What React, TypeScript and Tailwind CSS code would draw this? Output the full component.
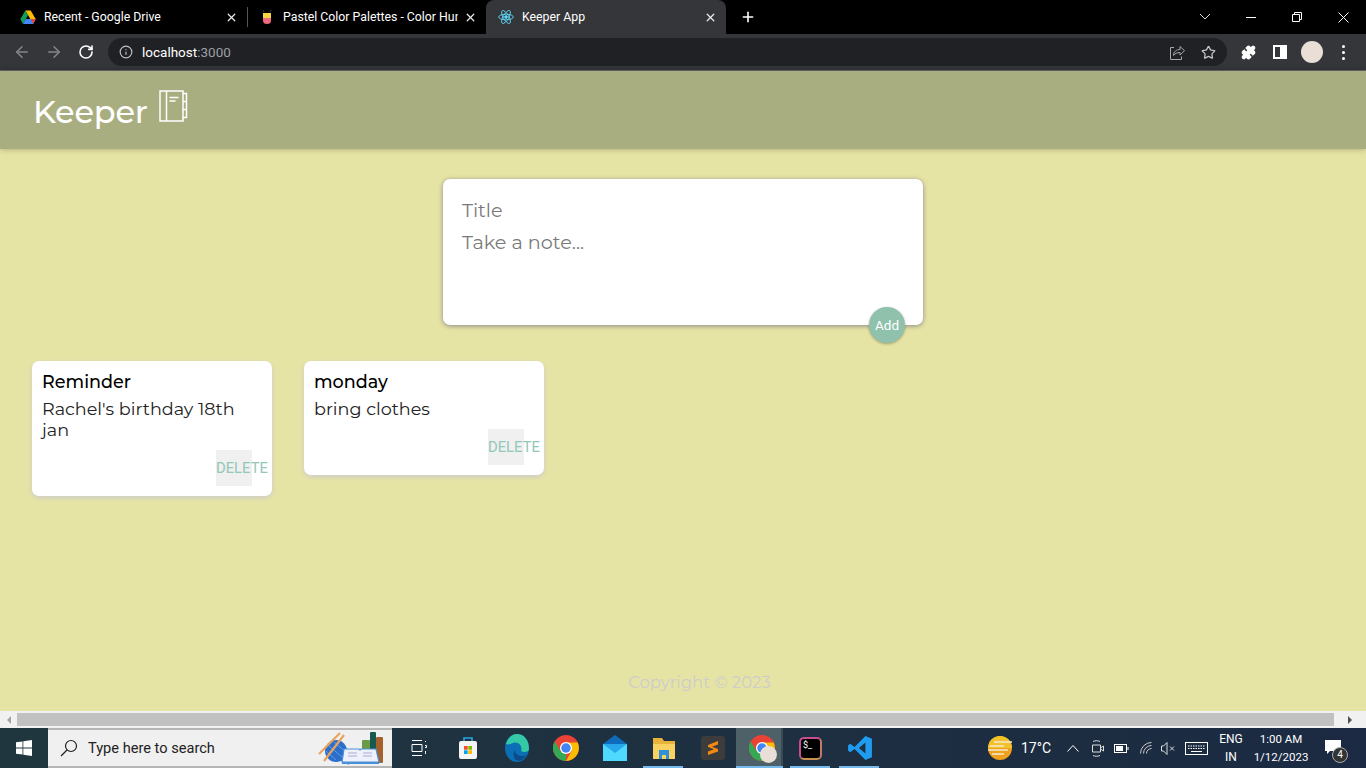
import { ArrowLeft, ArrowRight, RotateCw, Info, Star, Puzzle, X, Plus } from 'lucide-react';

function DriveIcon() {
    return (
        <svg width="16" height="15" viewBox="0 0 16 15">
            <path d="M5.3 0.5h5.4l5 8.6h-5.4z" fill="#fbbc04" />
            <path d="M5.3 0.5L0.3 9.2l2.7 4.8 5-8.7z" fill="#0f9d58" />
            <path d="M3 14h10.2l2.5-4.9H5.7z" fill="#4285f4" />
            <path d="M13.2 14l2.5-4.9h-5z" fill="#ea4335" />
        </svg>
    );
}

function HuntIcon() {
    return (
        <svg width="14" height="16" viewBox="0 0 14 16">
            <path d="M3 4h8v5H3z" fill="#f6d743" />
            <path d="M3 9h8v2.5a4 3.5 0 0 1-8 0z" fill="#ee6a7c" />
            <path d="M3 1l1 2M11 1l-1 2" stroke="#333" />
        </svg>
    );
}

function ReactIcon() {
    return (
        <svg width="16" height="16" viewBox="0 0 24 24" fill="none" stroke="#61dafb" strokeWidth="1.3">
            <circle cx="12" cy="12" r="2" fill="#61dafb" />
            <ellipse cx="12" cy="12" rx="11" ry="4.2" />
            <ellipse cx="12" cy="12" rx="11" ry="4.2" transform="rotate(60 12 12)" />
            <ellipse cx="12" cy="12" rx="11" ry="4.2" transform="rotate(120 12 12)" />
        </svg>
    );
}

function NotebookIcon() {
    return (
        <svg width="29" height="33" viewBox="0 0 29 33" fill="none" stroke="#fff" strokeWidth="1.5">
            <path d="M1 1h23v30H1z" />
            <path d="M7.5 1v30" />
            <path d="M24 3.5h3.5v8H24M24 11.5h3.5v8H24M24 19.5h3.5v8H24" />
            <path d="M10.5 7.5h9M10.5 11h6" strokeWidth="1.4" />
        </svg>
    );
}

function ChromeIcon() {
    return (
        <svg width="26" height="26" viewBox="0 0 24 24">
            <circle cx="12" cy="12" r="12" fill="#ea4335" />
            <path d="M12 24A12 12 0 0 1 1.6 6L7 15l5 2z" fill="#34a853" />
            <path d="M12 24l5-9-5-8h10.8A12 12 0 0 1 12 24z" fill="#fbbc04" />
            <circle cx="12" cy="12" r="5.6" fill="#fff" />
            <circle cx="12" cy="12" r="4.4" fill="#4285f4" />
        </svg>
    );
}

function Tab({ icon, title, active, width, left }: { icon: React.ReactNode; title: string; active?: boolean; width: string; left: string }) {
    return (
        <div className={`flex items-center h-[34px] shrink-0 pr-[8px] ${left} ${width} ${active ? 'bg-[#35363a] rounded-t-[8px]' : 'bg-black'}`}>
            <div className="w-[20px] flex justify-center shrink-0">{icon}</div>
            <span className="ml-[6px] flex-1 min-w-0 text-[12.3px] text-white whitespace-nowrap overflow-hidden">{title}</span>
            <X size={13} strokeWidth={2.4} className="text-[#e8eaed] ml-[6px] mr-[1px] shrink-0" />
        </div>
    );
}

function Note({ title, body }: { title: string; body: string }) {
    return (
        <div className="w-[240px] bg-white rounded-[7px] shadow-[0_2px_5px_#ccc] py-[10px] px-[10px] shrink-0">
            <h1 className="text-[17.6px] leading-[22px] font-medium text-black">{title}</h1>
            <p className="text-[17.6px] leading-[21px] mt-[5px] mb-[10px] text-[#222] font-normal">{body}</p>
            <div className="flex justify-end pr-[10px]">
                <button className="w-[36px] h-[36px] bg-[#f0f0f0] text-[14.8px] text-[#93c7b8] font-['Roboto',sans-serif] flex items-center whitespace-nowrap">DELETE</button>
            </div>
        </div>
    );
}

function TaskCell({ children, lit, active }: { children: React.ReactNode; lit?: boolean; active?: boolean }) {
    return (
        <div className="w-[49px] h-[40px] flex justify-center items-center relative shrink-0">
            {active && <div className="absolute inset-y-0 left-[-1px] right-[3px] bg-[#4e6068] border-r-2 border-[#3a4a54]" />}
            <div className="relative flex">{children}</div>
            {lit && <div className={`absolute bottom-0 h-[2px] bg-[#76b9ed] ${active ? 'left-[-1px] right-[3px]' : 'left-[4px] right-[5px]'}`} />}
        </div>
    );
}

export default function App() {
    return (
        <div className="w-[1366px] h-[768px] flex flex-col overflow-hidden font-['Montserrat','Inter',sans-serif] bg-[#e6e4a4]">
            {/* tabs */}
            <div className="h-[34px] bg-black flex items-center shrink-0 font-['Roboto',sans-serif]">
                <div className="w-[8px]" />
                <Tab icon={<DriveIcon />} title="Recent - Google Drive" width="w-[239px]" left="pl-[10px]" />
                <div className="w-[1px] h-[20px] bg-[#555]" />
                <Tab icon={<HuntIcon />} title="Pastel Color Palettes - Color Hunt" width="w-[238px]" left="pl-[9px]" />
                <Tab icon={<ReactIcon />} title="Keeper App" width="w-[240px]" left="pl-[10px]" active />
                <Plus size={16} strokeWidth={2.4} className="text-white ml-[14px]" />
                <div className="flex-1" />
                <svg width="10" height="6" viewBox="0 0 10 6" fill="none" stroke="#ddd" className="mr-[36px]"><path d="M0 0l5 5 5-5" /></svg>
                <div className="w-[10px] h-[1px] bg-white mr-[36px]" />
                <svg width="10" height="10" viewBox="0 0 10 10" fill="none" stroke="#fff" className="mr-[36px]">
                    <path d="M2.5 2.5V.5h7v7h-2M.5 2.5h7v7h-7z" />
                </svg>
                <svg width="11" height="11" viewBox="0 0 11 11" fill="none" stroke="#fff" className="mr-[17px]"><path d="M.5.5l10 10M10.500.5l-10 10" /></svg>
            </div>
            {/* toolbar */}
            <div className="h-[37px] bg-[#35363a] border-b border-[#6b6b6b] flex items-center shrink-0 font-['Roboto',sans-serif]">
                <ArrowLeft size={18} className="text-[#85878a] ml-[13px]" />
                <ArrowRight size={18} className="text-[#85878a] ml-[14px]" />
                <RotateCw size={16} strokeWidth={2.4} className="text-white ml-[15px]" />
                <div className="ml-[14px] w-[1119px] h-[28px] bg-[#202124] rounded-full flex items-center pl-[11px] pr-[11px]">
                    <Info size={14} className="text-[#bdc1c6]" />
                    <span className="ml-[9px] text-[13.5px] text-white">localhost<span className="text-[#9aa0a6]">:3000</span></span>
                    <div className="flex-1" />
                    <svg width="16" height="15" viewBox="0 0 16 15" fill="none" stroke="#a5a7aa" className="mr-[16px]">
                        <path d="M5 2.500H1.500v12h11v-3" />
                        <path d="M4.500 10.500c0-4 3-6 6.500-6V1.500l4.500 4.200L11 10V7.500c-3 0-5 1-6.500 3z" />
                    </svg>
                    <Star size={15} className="text-[#c4c6c8]" />
                </div>
                <Puzzle size={15} fill="#fff" className="text-white ml-[14px]" />
                <div className="ml-[17px] w-[14px] h-[14px] border-[2px] border-white bg-[#35363a] flex justify-end">
                    <div className="w-[5px] bg-white" />
                </div>
                <div className="ml-[14px] w-[22px] h-[22px] rounded-full bg-[#eadfd6]" />
                <div className="ml-[19px] flex flex-col gap-[3px]">
                    <div className="w-[3px] h-[3px] rounded-full bg-white" />
                    <div className="w-[3px] h-[3px] rounded-full bg-white" />
                    <div className="w-[3px] h-[3px] rounded-full bg-white" />
                </div>
            </div>
            {/* page */}
            <div className="flex-1 flex flex-col min-h-0">
                <header className="h-[78px] bg-[#a9ae80] shadow-[0_0_6px_rgba(0,0,0,0.3)] flex items-start pl-[33px] pt-[19px] shrink-0">
                    <span className="text-[32px] leading-[44px] text-white font-medium tracking-[-0.2px]">Keeper</span>
                    <div className="ml-[11px]"><NotebookIcon /></div>
                </header>
                <div className="flex justify-center shrink-0 mt-[30px]">
                    <div className="relative w-[480px] h-[146px] bg-white rounded-[7px] shadow-[0_1px_5px_rgb(138,138,138)] px-[19px] pt-[19px]">
                        <div className="text-[19.2px] leading-[24px] text-[#7a7a7a]">Title</div>
                        <div className="text-[19.2px] leading-[24px] text-[#7a7a7a] mt-[8px]">Take a note...</div>
                        <button className="absolute right-[18px] bottom-[-18px] w-[36px] h-[36px] pt-[1px] rounded-full bg-[#8fc1ad] text-white text-[13.5px] font-['Roboto',sans-serif] shadow-[0_1px_3px_rgba(0,0,0,0.3)]">Add</button>
                    </div>
                </div>
                <div className="flex items-start gap-[32px] pl-[32px] mt-[36px] shrink-0">
                    <Note title="Reminder" body="Rachel's birthday 18th jan" />
                    <Note title="monday" body="bring clothes" />
                </div>
                <div className="flex-1" />
                <footer className="h-[20px] mb-[19px] text-center text-[16.5px] leading-[20px] text-[#ccc] pl-[33px]">Copyright © 2023</footer>
            </div>
            {/* scrollbar */}
            <div className="h-[17px] bg-[#f1f1f1] flex items-center shrink-0">
                <div className="w-[17px] flex justify-center"><div className="w-0 h-0 border-y-[4px] border-y-transparent border-r-[4px] border-r-[#a3a3a3]" /></div>
                <div className="w-[1317px] h-[13px] bg-[#c1c1c1]" />
                <div className="flex-1 flex justify-center"><div className="w-0 h-0 border-y-[4px] border-y-transparent border-l-[4px] border-l-[#505050]" /></div>
            </div>
            {/* taskbar */}
            <div className="h-[40px] bg-gradient-to-r from-[#20363f] to-[#1b2a42] flex items-center shrink-0 text-white font-['Roboto',sans-serif]">
                <div className="w-[48px] flex justify-center">
                    <svg width="16" height="16" viewBox="0 0 16 16" fill="#fff"><path d="M0 2.300l6.500-.9v6.200H0zM7.300 1.300L16 0v7.600H7.300zM0 8.400h6.500v6.200L0 13.700zM7.300 8.400H16V16l-8.700-1.300z" /></svg>
                </div>
                <div className="w-[344px] h-[40px] bg-[#f0f0f0] border-y-2 border-[#b5b5b5] flex items-center pl-[12px] relative">
                    <svg width="18" height="18" viewBox="0 0 18 18" fill="none" stroke="#222" strokeWidth="1.2"><circle cx="11" cy="7" r="5.500" /><path d="M7 11l-6 6" /></svg>
                    <span className="ml-[10px] text-[14.6px] text-[#222] pt-[2px]">Type here to search</span>
                    <svg width="76" height="38" viewBox="0 0 76 38" className="absolute right-[0px] top-[-1px]">
                        <path d="M19 26c3 4 8 6 14 9" fill="none" stroke="#2d72d0" strokeWidth="1.500" />
                        <circle cx="20" cy="22" r="11" fill="#2d6ecb" />
                        <path d="M12 16l14 12M10 22l10 9M18 13l13 11" stroke="#5b9be8" />
                        <path d="M8 32L28 6M3 25L24 4" stroke="#e8a35c" strokeWidth="2.200" />
                        <rect x="54" y="3" width="6" height="19" rx="1" fill="#17594e" />
                        <rect x="46" y="11" width="8" height="11" rx="1" fill="#6a9a45" />
                        <rect x="60" y="8" width="7" height="26" rx="1" fill="#a5602c" />
                        <path d="M28 20h15l1 1 1-1h15l3 13H26z" fill="#eef0fb" stroke="#4a90d9" strokeWidth="1.200" />
                        <path d="M32 24h9M32 27h9M47 24h9M47 27h9" stroke="#a9aed0" />
                        <path d="M26 33h37v2H26z" fill="#4a90d9" />
                    </svg>
                </div>
                <div className="w-[2px] shrink-0" />
                <TaskCell>
                    <svg width="16" height="16" viewBox="0 0 16 16" fill="none" stroke="#fff"><path d="M1 .5h10M1 15.500h10M1 4.500h10v7H1zM14.500 1v1M14 5.500h1.500v2H14M14.500 11v3" /></svg>
                </TaskCell>
                <TaskCell>
                    <svg width="18" height="24" viewBox="0 0 18 24"><path d="M5 6V2h8v4" fill="none" stroke="#2aa5e0" strokeWidth="1.600" /><rect x="0" y="5" width="18" height="18" rx="2" fill="#f4f4f4" /><rect x="5" y="10" width="3.700" height="3.700" fill="#f25022" /><rect x="9.300" y="10" width="3.700" height="3.700" fill="#7fba00" /><rect x="5" y="14.300" width="3.700" height="3.700" fill="#00a4ef" /><rect x="9.300" y="14.300" width="3.700" height="3.700" fill="#ffb900" /></svg>
                </TaskCell>
                <TaskCell>
                    <svg width="24" height="28" viewBox="0 0 24 28"><ellipse cx="12" cy="14" rx="12" ry="14" fill="#0c6fb5" /><path d="M1 10C3 3 8 0 12 0c7 0 12 6 12 15 0 3-5 4-8 2 2-5-3-10-8-8-3 1-5 2-7 1z" fill="#35c8a5" /><path d="M10 16c0 4 4 6 8 6 2 0 3-1 4-2-2 5-7 8-11 6-3-2-3-8-1-10z" fill="#0a4c8c" /></svg>
                </TaskCell>
                <TaskCell><ChromeIcon /></TaskCell>
                <TaskCell>
                    <svg width="24" height="26" viewBox="0 0 24 26"><path d="M0 9l12-9 12 9v17H0z" fill="#0f6cbd" /><path d="M0 9h24v17H0z" fill="#28a8ea" /><path d="M0 9l12 9 12-9v17H0z" fill="#50d9ff" /></svg>
                </TaskCell>
                <TaskCell lit>
                    <svg width="22" height="21" viewBox="0 0 22 21"><path d="M0 0h9l2 3h11v15H0z" fill="#e9b23a" /><path d="M0 6h22v15H0z" fill="#f9d262" /><path d="M6 12h10v9h-3v-4H9v4H6z" fill="#2f8fd8" /></svg>
                </TaskCell>
                <TaskCell>
                    <div className="w-[24px] h-[24px] rounded-[3px] bg-[#3c3c3c] flex items-center justify-center">
                        <svg width="12" height="16" viewBox="0 0 12 16" fill="#f48a12"><path d="M1 5L11 1v3.500L5 6.800 11 9v2.500L1 15v-3.500l6-2.300L1 7z" /></svg>
                    </div>
                </TaskCell>
                <TaskCell lit active>
                    <div className="relative">
                        <ChromeIcon />
                        <div className="absolute left-[11px] top-[11px] w-[17px] h-[17px] rounded-full bg-[#eadfd6]" />
                    </div>
                </TaskCell>
                <TaskCell lit>
                    <div className="w-[23px] h-[23px] rounded-[5px] bg-black border-2 border-t-[#c84d8c] border-l-[#c84d8c] border-r-[#c07a6a] border-b-[#c9914e] text-white text-[9px] leading-[12px] pl-[2px]">$_</div>
                </TaskCell>
                <TaskCell lit>
                    <svg width="26" height="26" viewBox="0 0 24 24"><path d="M17 1L7 11 3 8 1 9.500v5L3 16l4-3 10 10 6-2.500v-17zm0 6v10l-6-5z" fill="#1f9cf0" /></svg>
                </TaskCell>
                <div className="flex-1" />
                <svg width="24" height="24" viewBox="0 0 24 24" className="shrink-0">
                    <circle cx="12" cy="12" r="12" fill="#f0a21e" />
                    <path d="M12 0a12 12 0 0 1 12 12H0A12 12 0 0 1 12 0z" fill="#f3c22a" />
                    <path d="M6 6h18M2 10h14M0 14h20M4 18h12" stroke="#f5ead0" strokeWidth="1.500" />
                </svg>
                <span className="ml-[9px] text-[14px] w-[28px] whitespace-nowrap">17°C</span>
                <svg width="12" height="7" viewBox="0 0 12 7" fill="none" stroke="#fff" className="ml-[18px]"><path d="M.5 6.500l5.500-6 5.500 6" /></svg>
                <svg width="12" height="17" viewBox="0 0 12 17" fill="none" stroke="#ddd" className="ml-[13px]"><path d="M1 1.500C3 .5 6 .5 8 1.500M1 15.500c2 1 5 1 7 0M.5 5h8v7h-8zM8.500 8l3-2v5l-3-2" /></svg>
                <svg width="15" height="9" viewBox="0 0 15 9" fill="none" stroke="#fff" className="ml-[10px]"><rect x=".5" y=".5" width="12" height="8" /><rect x="2" y="2" width="7" height="5" fill="#fff" stroke="none" /><path d="M14 3v3" /></svg>
                <svg width="12" height="12" viewBox="0 0 12 12" fill="none" stroke="#ccc" className="ml-[11px]"><path d="M.5 11.500A11 11 0 0 1 11.500 .5M3.500 11.500a8 8 0 0 1 8-8M6.500 11.500a5 5 0 0 1 5-5" /></svg>
                <svg width="14" height="13" viewBox="0 0 14 13" fill="none" stroke="#ddd" className="ml-[9px]"><path d="M.5 4h2L6 .5v12L2.500 9h-2zM9 4.500l4 4M13 4.500l-4 4" /></svg>
                <svg width="23" height="13" viewBox="0 0 23 13" fill="none" stroke="#fff" className="ml-[10px]"><rect x=".5" y=".5" width="22" height="12" /><path d="M3 4h17M3 6.500h17" strokeDasharray="1.500 1" /><path d="M6 9.500h11" /></svg>
                <div className="flex flex-col items-center text-[12px] leading-[18px] ml-[11px] w-[24px]"><span>ENG</span><span>IN</span></div>
                <div className="flex flex-col items-center text-[11.5px] leading-[18px] ml-[12px] w-[52px] whitespace-nowrap"><span>1:00 AM</span><span>1/12/2023</span></div>
                <div className="relative ml-[18px] mr-[25px] -mt-[2px]">
                    <svg width="16" height="15" viewBox="0 0 16 15" fill="#fff" className="block"><path d="M0 0h16v11H5l-3 3v-3H0z" /></svg>
                    <div className="absolute left-[7px] top-[7px] w-[16px] h-[16px] rounded-full bg-[#333] border border-[#aaa] text-[10px] leading-[14px] text-center">4</div>
                </div>
            </div>
        </div>
    );
}
